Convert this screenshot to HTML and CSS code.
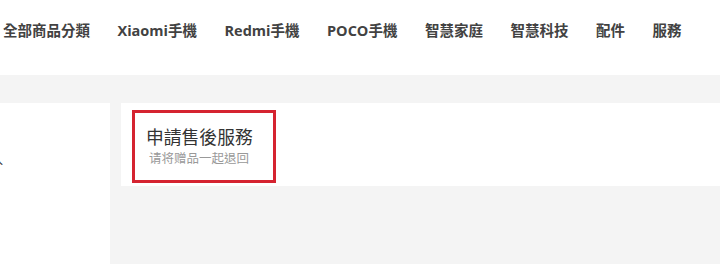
FILE: index.html
```html
<!DOCTYPE html>
<html lang="zh-Hant">
<head>
<meta charset="utf-8">
<link rel="stylesheet" href="styles.css">
</head>
<body>
<nav class="nav">
  <a class="nav-item">全部商品分類</a>
  <a class="nav-item">Xiaomi手機</a>
  <a class="nav-item">Redmi手機</a>
  <a class="nav-item">POCO手機</a>
  <a class="nav-item">智慧家庭</a>
  <a class="nav-item">智慧科技</a>
  <a class="nav-item">配件</a>
  <a class="nav-item">服務</a>
</nav>
<div class="band"></div>
<main class="main">
  <aside class="sidebar"><span class="side-glyph">入</span></aside>
  <section class="content">
    <div class="panel">
      <div class="service-box">
        <div class="service-title">申請售後服務</div>
        <div class="service-sub">请将赠品一起退回</div>
      </div>
    </div>
  </section>
</main>
<div class="foot"></div>
</body>
</html>
```
FILE: styles.css
```css
* { box-sizing: border-box; }
html, body { margin: 0; padding: 0; }
body {
  width: 720px;
  height: 265px;
  overflow: hidden;
  background: #fff;
  font-family: "Open Sans", "Noto Sans CJK TC", "Noto Sans CJK SC", sans-serif;
  color: #333;
}
.nav {
  height: 75px;
  display: flex;
  align-items: center;
  gap: 27.5px;
  padding: 0 0 14px 3px;
  white-space: nowrap;
}
.nav-item {
  font-size: 14.5px;
  font-weight: 700;
  color: #424242;
  line-height: 20px;
}
.band {
  height: 28px;
  background: #f4f4f4;
}
.main {
  display: flex;
  height: 161px;
  background: #f4f4f4;
}
.sidebar {
  width: 110px;
  background: #fff;
  padding-top: 50px;
  overflow: hidden;
}
.side-glyph {
  display: block;
  margin-left: -9px;
  font-size: 12px;
  line-height: 14px;
  color: #333;
}
.content {
  flex: 1;
  padding-left: 11px;
}
.panel {
  height: 83px;
  background: #fff;
  padding: 7px 0 0 11px;
}
.service-box {
  width: 144px;
  height: 73px;
  border: 3px solid #d52330;
  padding: 13px 0 0 11px;
}
.service-title {
  font-size: 17.8px;
  line-height: 22px;
  color: #333;
  font-weight: 400;
}
.service-sub {
  margin-top: 3px;
  padding-left: 3px;
  font-size: 12.5px;
  line-height: 16px;
  color: #999;
}
.foot {
  height: 1px;
  background: #fff;
}
```
